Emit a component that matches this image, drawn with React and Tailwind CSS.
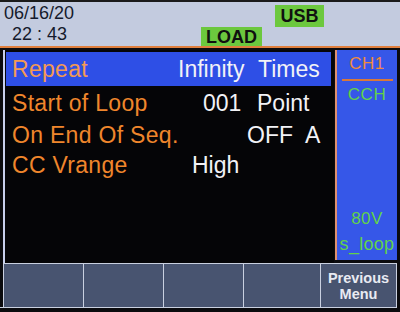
export default function App() {
  const font = { fontFamily: '"Liberation Sans", Arial, sans-serif' };
  return (
    <div className="w-[400px] h-[312px] bg-[#0b0b0e] flex flex-col overflow-hidden" style={font}>
      {/* Header */}
      <div className="h-[48px] shrink-0 bg-[#c3cbdf] border-t-2 border-[#1a1a1a] border-b-2 border-b-[#e07f3e] flex">
        <div className="w-[201px] shrink-0 flex flex-col pl-[4px] pt-[1px] text-[#151a2c] text-[18px] leading-[21px]">
          <span>06/16/20</span>
          <span className="pl-[8px]">22 : 43</span>
        </div>
        <div className="self-end w-[61px] h-[19px] bg-[#6cc83e] flex items-center justify-center text-[18px] font-bold text-[#101010] leading-none">
          LOAD
        </div>
        <div className="self-start mt-[3px] ml-[13px] w-[49px] h-[22px] bg-[#6cc83e] flex items-center justify-center text-[18px] font-bold text-[#101010] leading-none">
          USB
        </div>
      </div>

      {/* Middle */}
      <div className="h-[215px] shrink-0 flex pt-[2px]">
        <div className="ml-[3px] w-[331px] border-l-2 border-[#c8d0ec] bg-[#050507] pl-[1px] pt-[2px] text-[23px] leading-none">
          <div className="h-[34px] w-[325px] bg-[#2e4fe6] flex items-center pl-[6px]">
            <span className="w-[166px] text-[#f49a52] tracking-[0.3px]">Repeat</span>
            <span className="w-[80px] text-[#f2f2f6]">Infinity</span>
            <span className="text-[#f2f2f6]">Times</span>
          </div>
          <div className="h-[34px] flex items-center pl-[6px]">
            <span className="w-[191px] text-[#f0862c] tracking-[0.3px]">Start of Loop</span>
            <span className="w-[54px] text-[#f2f2f6]">001</span>
            <span className="text-[#f2f2f6]">Point</span>
          </div>
          <div className="h-[30px] flex items-center pl-[6px]">
            <span className="w-[235px] text-[#f0862c] tracking-[0.3px]">On End Of Seq.</span>
            <span className="w-[58px] text-[#f2f2f6]">OFF</span>
            <span className="text-[#f2f2f6]">A</span>
          </div>
          <div className="h-[30px] flex items-center pl-[6px]">
            <span className="w-[180px] text-[#f0862c] tracking-[0.3px]">CC Vrange</span>
            <span className="text-[#f2f2f6]">High</span>
          </div>
        </div>
        <div className="ml-[1px] w-[62px] mb-[3px] border-l-2 border-[#e0906e] bg-[#3657e8] flex flex-col items-center text-[17px] leading-none">
          <span className="mt-[5px] text-[#f08a3c] tracking-[0.5px]">CH1</span>
          <div className="mt-[7px] w-[51px] h-[2px] bg-[#d9783a]"></div>
          <span className="mt-[5px] text-[#62d24a] tracking-[0.5px]">CCH</span>
          <div className="flex-1"></div>
          <span className="text-[#62d24a] tracking-[0.5px]">80V</span>
          <span className="mt-[8px] mb-[7px] text-[#62d24a] text-[18px] tracking-[0.3px]">s_loop</span>
        </div>
      </div>

      {/* Bottom buttons */}
      <div className="h-[45px] shrink-0 flex pl-[3px] border-b border-[#c9d0e0] w-[397px]">
        <div className="w-[80px] bg-[#485470] border-t border-l border-[#c9d0e0]"></div>
        <div className="w-[80px] bg-[#485470] border-t border-l border-[#c9d0e0]"></div>
        <div className="w-[80px] bg-[#485470] border-t border-l border-[#c9d0e0]"></div>
        <div className="w-[77px] bg-[#485470] border-t border-l border-[#c9d0e0]"></div>
        <div className="w-[77px] bg-[#485470] border-t border-l border-r border-[#c9d0e0] flex flex-col items-center justify-center text-[14.5px] font-bold leading-[16px] text-[#e8eaf2]">
          <span>Previous</span>
          <span>Menu</span>
        </div>
      </div>
    </div>
  );
}
